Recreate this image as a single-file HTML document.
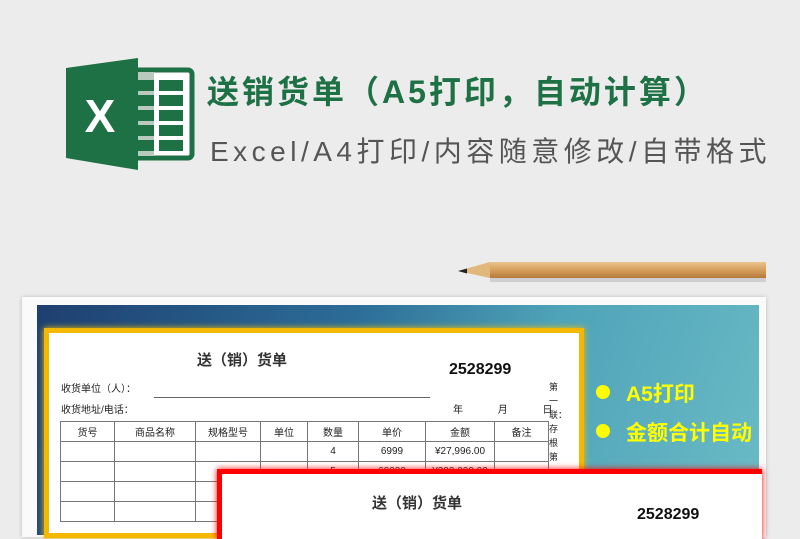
<!DOCTYPE html>
<html><head><meta charset="utf-8"><style>
*{margin:0;padding:0;box-sizing:border-box}
body{width:800px;height:526px;overflow:hidden;background:#ececec;position:relative;font-family:"Liberation Sans","Noto Sans CJK SC",sans-serif}
.abs{position:absolute}
.title{left:207px;top:72px;font-size:32px;font-weight:bold;color:#1e7145;letter-spacing:3px;white-space:nowrap;line-height:40px}
.sub{left:210px;top:133px;font-size:28px;color:#555;letter-spacing:4.5px;white-space:nowrap;line-height:38px}
.card{left:22px;top:297px;width:744px;height:240px;background:#fafafa;box-shadow:0 0 4px #bbb}
.blue{left:37px;top:305px;width:722px;height:230px;background:linear-gradient(110deg,#1e3f70 0%,#2c6d97 40%,#4fa3b8 65%,#6bbcc6 100%)}
.sheet{background:#fff;color:#222}
.s1{left:44px;top:328px;width:540px;height:210px;border:5px solid #f5b800;box-shadow:0 0 6px #f5c000}
.s2{left:217px;top:469px;width:545px;height:70px;border-top:5px solid #f00;border-left:5px solid #f00;box-shadow:0 0 6px #f00}
table{border-collapse:collapse;position:absolute;font-size:10px;text-align:center}
td{border:1px solid #777;height:20px}
.bul{font-size:21px;font-weight:bold;color:#ffff00;white-space:nowrap}
.dot{width:14px;height:14px;border-radius:50%;background:#ffff00}
</style></head><body>
<svg class="abs" style="left:66px;top:58px" width="130" height="112" viewBox="0 0 130 112">
<rect x="64" y="12" width="62" height="88" rx="4" fill="#fff" stroke="#1e7145" stroke-width="5"/>
<rect x="66" y="14" width="22" height="84" fill="#b9c9bd"/>
<g fill="#1e7145">
<rect x="72" y="22" width="16" height="11"/><rect x="93" y="22" width="24" height="11"/>
<rect x="72" y="37" width="16" height="11"/><rect x="93" y="37" width="24" height="11"/>
<rect x="72" y="52" width="16" height="11"/><rect x="93" y="52" width="24" height="11"/>
<rect x="72" y="67" width="16" height="11"/><rect x="93" y="67" width="24" height="11"/>
<rect x="72" y="82" width="16" height="11"/><rect x="93" y="82" width="24" height="11"/>
</g>
<polygon points="0,10 72,0 72,112 0,100" fill="#1e7145"/>
<text x="34" y="74" font-family="Liberation Sans" font-weight="bold" font-size="46" fill="#fff" text-anchor="middle">X</text>
</svg>
<div class="abs title">送销货单（A5打印，自动计算）</div>
<div class="abs sub">Excel/A4打印/内容随意修改/自带格式</div>
<svg class="abs" style="left:455px;top:258px" width="315" height="26" viewBox="0 0 315 26">
<defs><linearGradient id="w" x1="0" y1="0" x2="0" y2="1"><stop offset="0" stop-color="#e9c48e"/><stop offset="0.5" stop-color="#d79f5c"/><stop offset="1" stop-color="#b57a3c"/></linearGradient></defs>
<rect x="35" y="4" width="276" height="16" fill="url(#w)"/>
<polygon points="3,13 35,4 35,20" fill="#e2b77c"/>
<polygon points="3,13 12,10.5 12,15.5" fill="#222"/>
<rect x="35" y="20" width="276" height="4" fill="#000" opacity="0.12"/>
</svg>
<div class="abs card"></div>
<div class="abs blue"></div>
<div class="abs dot" style="left:596px;top:385px"></div>
<div class="abs bul" style="left:626px;top:378px">A5打印</div>
<div class="abs dot" style="left:596px;top:424px"></div>
<div class="abs bul" style="left:626px;top:417px">金额合计自动</div>
<div class="abs sheet s1">
<div class="abs" style="left:148px;top:16px;font-size:15px;font-weight:bold;color:#333">送（销）货单</div>
<div class="abs" style="left:400px;top:28px;font-size:16px;font-weight:bold;color:#111">2528299</div>
<div class="abs" style="left:12px;top:47px;font-size:10px">收货单位（人）：</div>
<div class="abs" style="left:105px;top:64px;width:276px;border-top:1px solid #666"></div>
<div class="abs" style="left:12px;top:68px;font-size:10px">收货地址/电话：</div>
<div class="abs" style="left:404px;top:68px;font-size:10px;word-spacing:32px">年 月 日</div>
<div class="abs" style="left:500px;top:47px;font-size:9px;width:10px;line-height:14px">第一联：存根第</div>
<table style="left:11px;top:88px">
<tr><td style="width:54px">货号</td><td style="width:81px">商品名称</td><td style="width:65px">规格型号</td><td style="width:47px">单位</td><td style="width:51px">数量</td><td style="width:67px">单价</td><td style="width:69px">金额</td><td style="width:54px">备注</td></tr>
<tr><td></td><td></td><td></td><td></td><td>4</td><td>6999</td><td>¥27,996.00</td><td></td></tr>
<tr><td></td><td></td><td></td><td></td><td>5</td><td>60000</td><td>¥300,000.00</td><td></td></tr>
<tr><td></td><td></td><td></td><td></td><td></td><td></td><td></td><td></td></tr>
<tr><td></td><td></td><td></td><td></td><td></td><td></td><td></td><td></td></tr>
</table>
</div>
<div class="abs sheet s2">
<div class="abs" style="left:150px;top:18px;font-size:15px;font-weight:bold;color:#333">送（销）货单</div>
<div class="abs" style="left:415px;top:32px;font-size:16px;font-weight:bold;color:#111">2528299</div>
</div>
</body></html>
